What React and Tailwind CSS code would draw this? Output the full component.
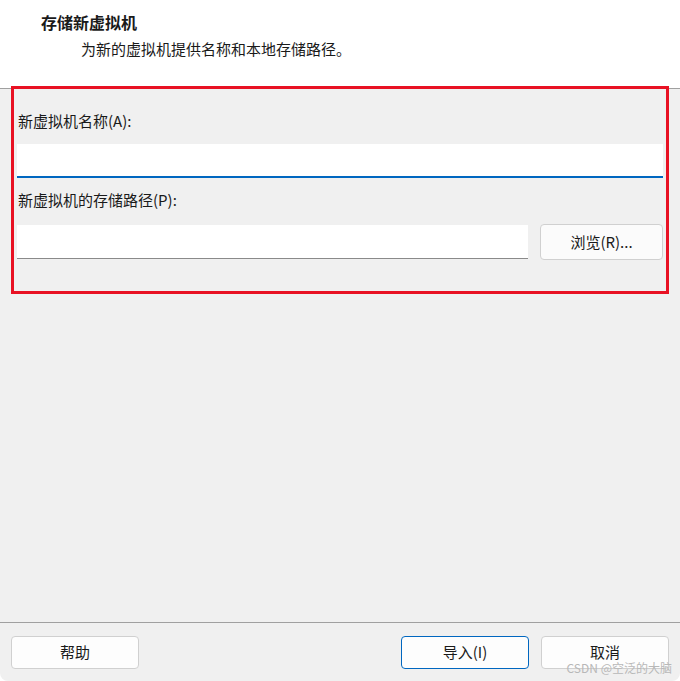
const font = { fontFamily: '"Noto Sans CJK SC", "Noto Sans", sans-serif' };

function Button({ children, primary }) {
  return (
    <button
      type="button"
      className={
        "h-[33px] w-[128px] rounded-[4px] bg-[#fdfdfd] text-[15px] text-[#1a1a1a] " +
        (primary ? "border border-[#0067c0]" : "border border-[#d0d0d0]")
      }
    >
      {children}
    </button>
  );
}

export default function App() {
  return (
    <div className="relative flex h-[681px] w-[680px] flex-col overflow-hidden rounded-b-[8px] bg-[#f0f0f0] text-[#1a1a1a]" style={font}>
      <div className="h-[89px] shrink-0 border-b border-[#a0a0a0] bg-white pl-[41px] pt-[9px]">
        <div className="text-[16px] font-bold leading-[26px]">存储新虚拟机</div>
        <div className="pl-[40px] pt-[1px] text-[15px] leading-[26px]">为新的虚拟机提供名称和本地存储路径。</div>
      </div>

      <div className="mx-[11px] -mt-[3px] h-[208px] border-[3px] border-[#e81123] pl-[3px] pr-[3px] pt-[22px]">
        <div className="pl-[1px] text-[15px] leading-[20px]">新虚拟机名称(A):</div>
        <div className="mt-[13px] h-[34px] border-b-2 border-[#0067c0] bg-white" />
        <div className="mt-[12px] pl-[1px] text-[15px] leading-[20px]">新虚拟机的存储路径(P):</div>
        <div className="mt-[14px] flex items-center gap-[12px]">
          <div className="h-[34px] flex-1 border-b border-[#8a8a8a] bg-white" />
          <button type="button" className="h-[36px] w-[123px] rounded-[4px] border border-[#d0d0d0] bg-[#fbfbfb] text-[15px]">
            浏览(R)...
          </button>
        </div>
      </div>

      <div className="flex-1" />

      <div className="h-[59px] shrink-0 border-t border-[#a0a0a0] px-[11px] pt-[13px]">
        <div className="flex items-center">
          <Button>帮助</Button>
          <div className="flex-1" />
          <Button primary>导入(I)</Button>
          <div className="w-[12px]" />
          <Button>取消</Button>
        </div>
      </div>

      <div className="absolute bottom-[5px] right-[8px] text-[12px] leading-[16px] text-[#b8b8b8]">CSDN @空泛的大脑</div>
    </div>
  );
}
